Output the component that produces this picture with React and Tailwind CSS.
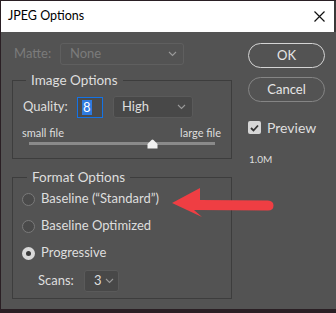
import React from "react";

const Chevron = ({ className = "" }) => (
  <svg width="9" height="6" viewBox="0 0 9 6" className={className}>
    <polyline points="1,1 4.5,4.5 8,1" fill="none" stroke="#9a9a9a" strokeWidth="1.1" />
  </svg>
);

const Radio = ({ checked, label }) => (
  <div className="flex h-[24px] items-center pl-[9px]">
    {checked ? (
      <div className="flex h-[13px] w-[13px] items-center justify-center rounded-full bg-[#d9d9d9]">
        <div className="h-[5px] w-[5px] rounded-full bg-[#3a3a3a]" />
      </div>
    ) : (
      <div className="h-[13px] w-[13px] rounded-full border-[1.5px] border-[#7a7a7a] bg-[#4a4a4a]" />
    )}
    <span className="ml-[6px]">{label}</span>
  </div>
);

const App = () => {
  return (
    <div
      className="relative h-[313px] w-[336px] overflow-hidden bg-[#2a1f24] text-[13px] text-[#dedede]"
      style={{ fontFamily: "Lato, 'Liberation Sans', sans-serif" }}
    >
      <div className="ml-[1px] mt-[1px] h-[308px] w-[335px] bg-[#535353]">
        {/* title bar */}
        <div className="flex h-[31px] bg-[#3a3a3a]">
          <div className="flex w-[333px] items-center justify-between bg-white pl-[7px] pr-[9px] text-[12.5px] text-black">
            <span>JPEG Options</span>
            <svg width="11" height="11" viewBox="0 0 11 11">
              <path d="M0.5 0.5 L10.5 10.5 M10.5 0.5 L0.5 10.5" stroke="#111" strokeWidth="1.2" />
            </svg>
          </div>
        </div>

        <div className="flex pl-[11px]">
          {/* left column */}
          <div className="w-[220px]">
            <div className="mt-[11px] flex h-[22px] items-center">
              <span className="ml-[2px] w-[46px] text-[#7b7b7b]">Matte:</span>
              <div className="flex h-[22px] w-[124px] items-center justify-between rounded-[3px] border border-[#5f5f5f] pl-[9px] pr-[6px] text-[#7b7b7b]">
                <span>None</span>
                <Chevron />
              </div>
            </div>

            <fieldset className="mt-[6px] w-[220px] border border-[#3d3d3d] px-0 pb-[13px]">
              <legend className="ml-[13px] px-[5px] text-[13.5px] leading-[18px]">Image Options</legend>
              <div className="mt-[7px] flex h-[22px] items-center pl-[10px]">
                <span className="w-[54px]">Quality:</span>
                <div className="flex h-[21px] w-[26px] items-center border border-[#1473e6] bg-[#4a4a4a] pl-[4px]">
                  <span className="bg-[#2f7be0] px-[1px] leading-[15px] text-white">8</span>
                </div>
                <div className="ml-[10px] flex h-[22px] w-[80px] items-center justify-between rounded-[3px] border border-[#5a5a5a] bg-[#484848] pl-[8px] pr-[6px]">
                  <span>High</span>
                  <Chevron />
                </div>
              </div>
              <div className="mt-[8px] flex justify-between pl-[9px] pr-[10px] text-[11px] leading-[14px]">
                <span>small file</span>
                <span>large file</span>
              </div>
              <div className="relative ml-[16px] mr-[16px] mt-[2px] h-[3px] bg-[#8a8a8a]">
                <svg width="11" height="10" viewBox="0 0 11 10" className="absolute left-[118px] top-[-3px]">
                  <path d="M5.5 0.5 Q6 0.5 6.5 1 L10.5 5 L10.5 9.5 L0.5 9.5 L0.5 5 L4.5 1 Q5 0.5 5.5 0.5 Z" fill="#f2f2f2" />
                </svg>
              </div>
            </fieldset>

            <fieldset className="mt-[9px] w-[220px] border border-[#3d3d3d] px-0 pb-[6px]">
              <legend className="ml-[14px] px-[5px] text-[13.5px] leading-[18px]">Format Options</legend>
              <div className="mt-[1px] flex flex-col gap-[3px]">
                <Radio label="Baseline (“Standard”)" />
                <Radio label="Baseline Optimized" />
                <Radio checked label="Progressive" />
              </div>
              <div className="mt-[5px] flex h-[22px] items-center pl-[25px]">
                <span className="w-[46px]">Scans:</span>
                <div className="flex h-[22px] w-[35px] items-center justify-between rounded-[3px] border border-[#5a5a5a] bg-[#484848] pl-[9px] pr-[4px]">
                  <span>3</span>
                  <Chevron />
                </div>
              </div>
            </fieldset>
          </div>

          {/* right column */}
          <div className="ml-[16px] flex w-[77px] flex-col">
            <button className="mt-[11px] h-[25px] rounded-full border-[1.5px] border-[#d4d4d4] text-[13px] text-[#e6e6e6]">
              OK
            </button>
            <button className="mt-[9px] h-[25px] rounded-full border border-[#858585] text-[13px] text-[#e6e6e6]">
              Cancel
            </button>
            <div className="mt-[15px] flex items-center">
              <div className="flex h-[13px] w-[13px] items-center justify-center rounded-[2px] bg-[#d6d6d6]">
                <svg width="9" height="8" viewBox="0 0 9 8">
                  <polyline points="1,4 3.5,6.5 8,1.5" fill="none" stroke="#333" strokeWidth="1.8" />
                </svg>
              </div>
              <span className="ml-[6px] text-[14px]">Preview</span>
            </div>
            <div className="ml-[1px] mt-[14px] text-[10px]">1.0M</div>
          </div>
        </div>
      </div>

      {/* annotation arrow */}
      <svg width="110" height="36" viewBox="0 0 110 36" className="absolute left-[170px] top-[186px]">
        <path
          d="M2 17 L30 2 L30 14 L98 14.5 Q103.5 15 103.5 19.5 Q103.5 24.5 98 24.5 L24 24 L32 31 Z"
          fill="#ef3e43"
        />
      </svg>
    </div>
  );
};

export default App;
